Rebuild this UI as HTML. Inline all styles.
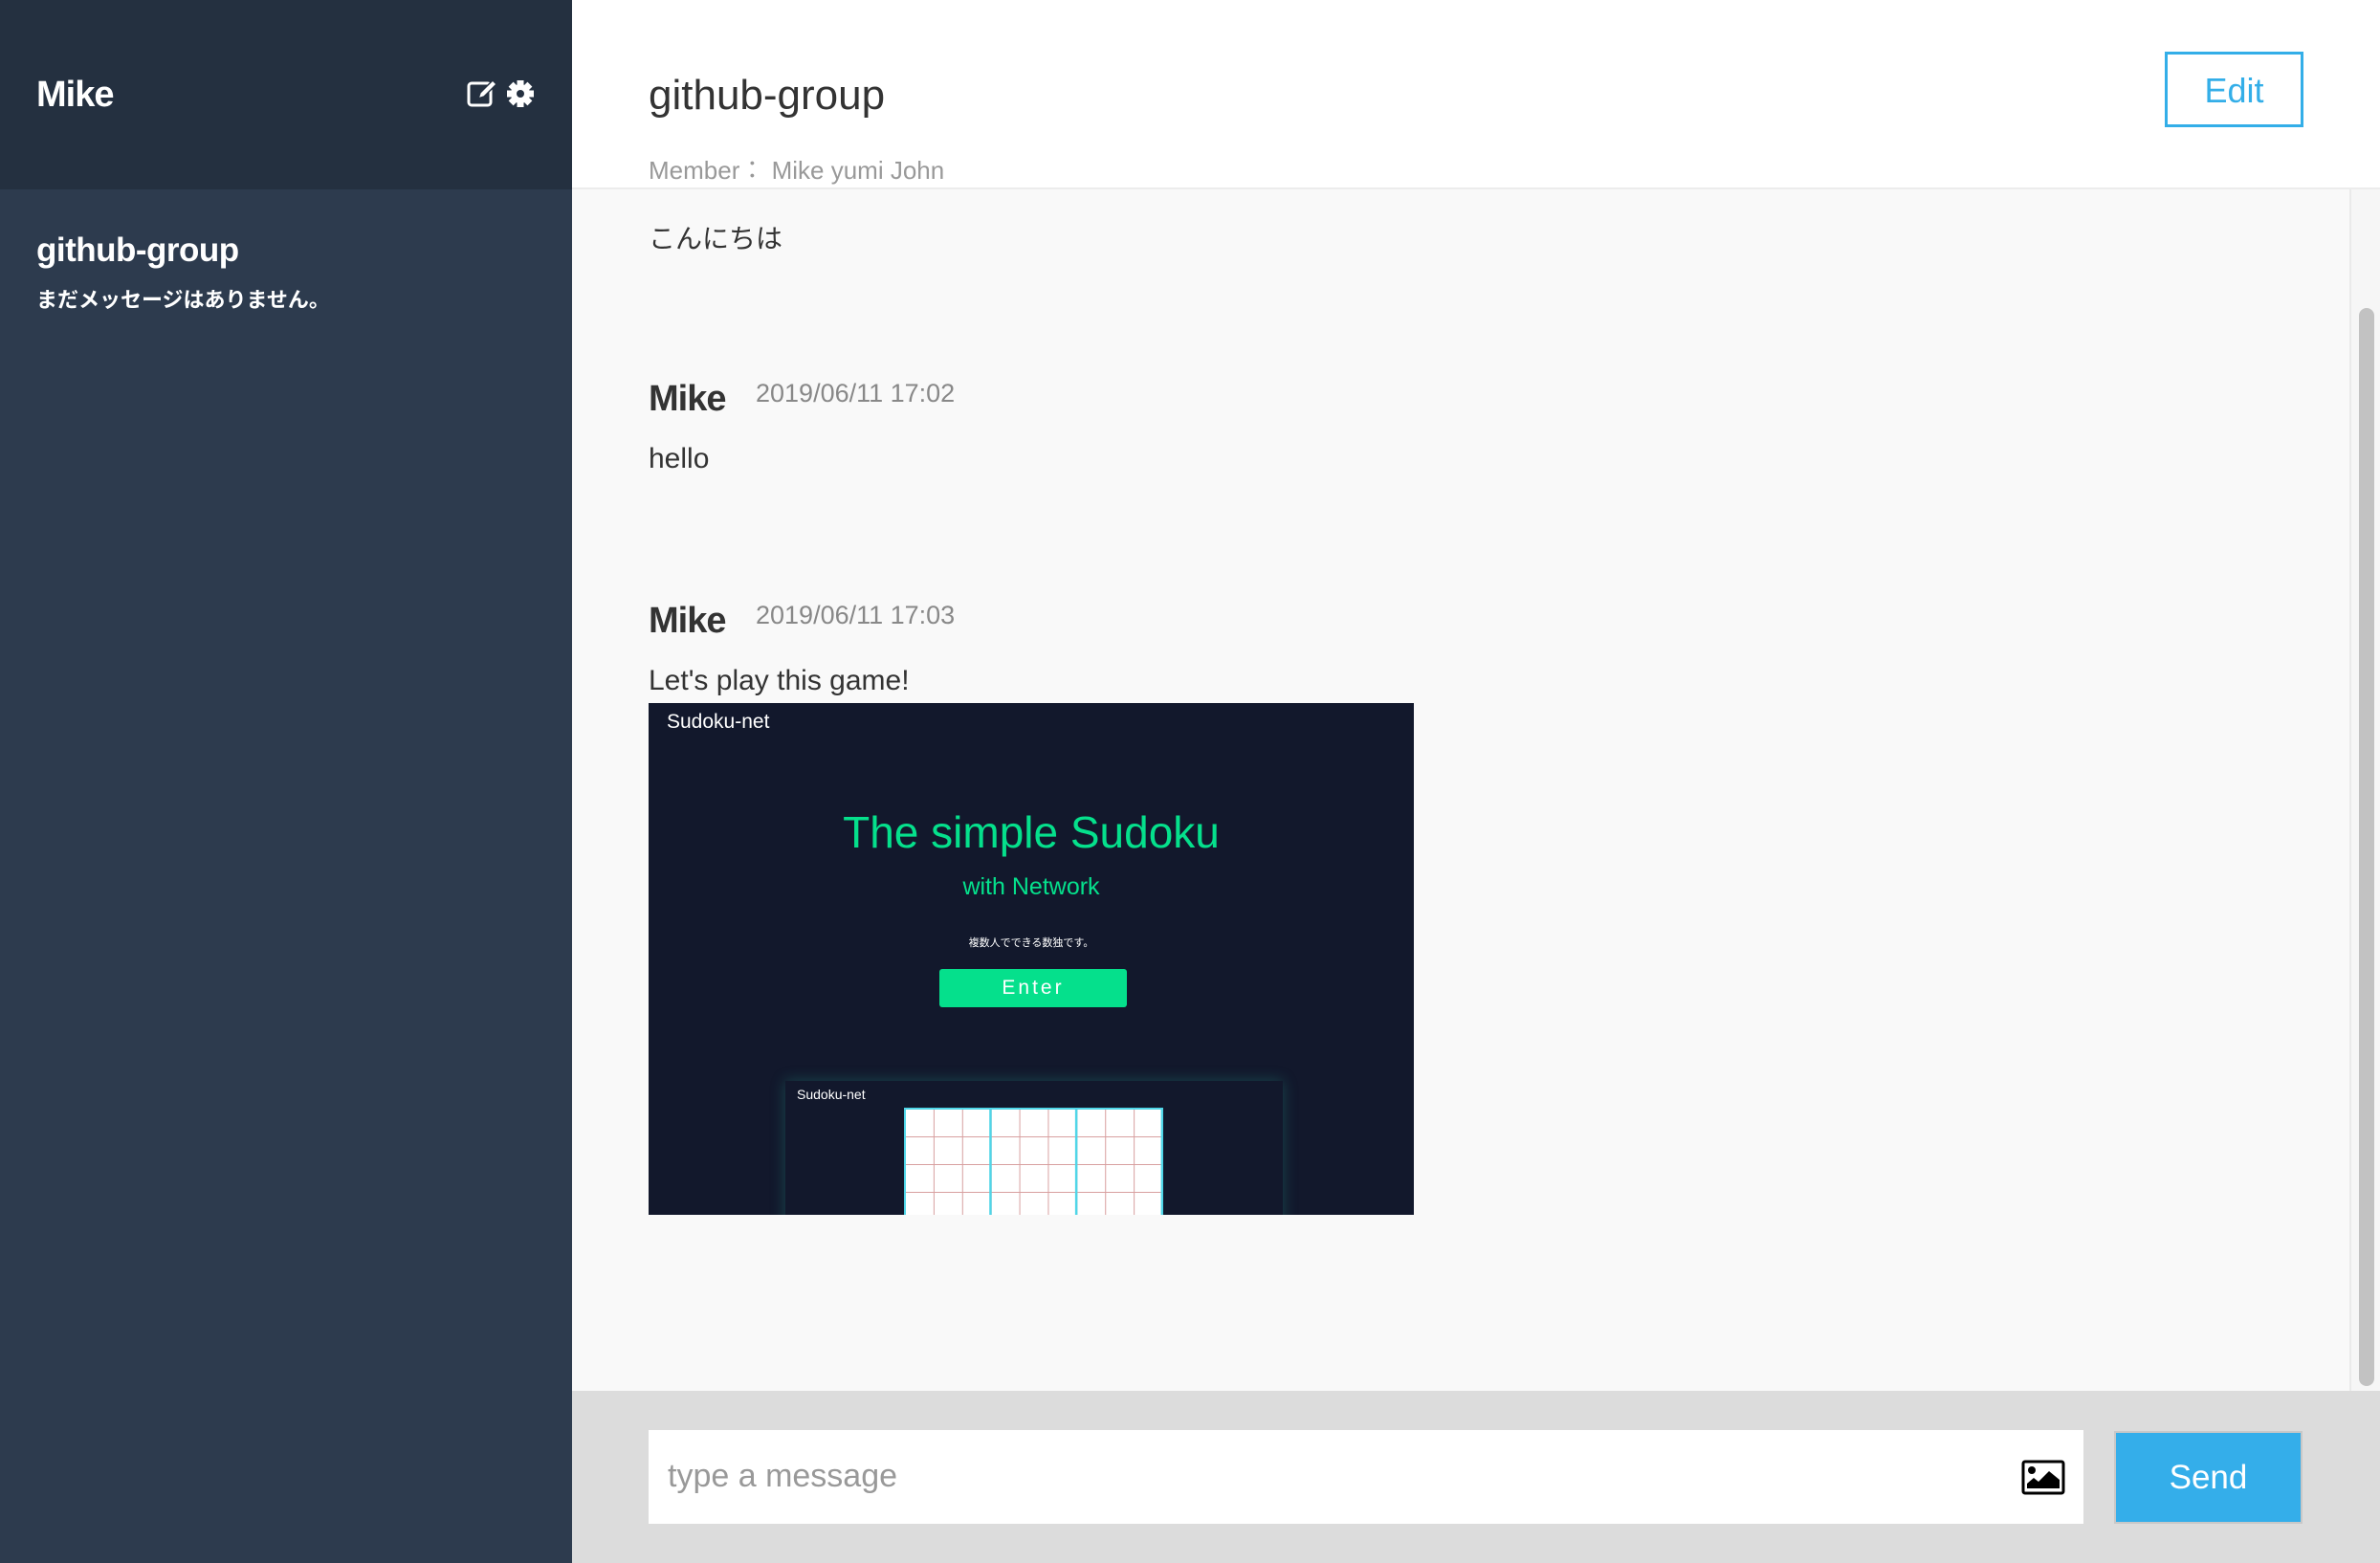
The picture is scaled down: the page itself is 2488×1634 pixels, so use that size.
<!DOCTYPE html>
<html><head><meta charset="utf-8"><style>
*{margin:0;padding:0;box-sizing:border-box}
body{width:2488px;height:1634px;position:relative;overflow:hidden;background:#f9f9f9;font-family:"Liberation Sans","Noto Sans CJK JP",sans-serif}
.abs{position:absolute}
</style></head><body>
<div class="abs" style="left:0;top:0;width:598px;height:198px;background:#243040"></div>
<div class="abs" style="left:0;top:198px;width:598px;height:1436px;background:#2d3b4e"></div>
<div class="abs" style="left:38px;top:78px;font-size:38px;font-weight:bold;color:#fff;letter-spacing:-1px">Mike</div>
<svg class="abs" style="left:488px;top:82px" width="32" height="32" viewBox="0 0 32 32"><rect x="2" y="5" width="23" height="23" rx="3" fill="none" stroke="#fff" stroke-width="3"/><path d="M12 21l2-6 13-13 4 4-13 13z" fill="#fff" stroke="#243040" stroke-width="1.5"/></svg>
<svg class="abs" style="left:529px;top:83px" width="30" height="30" viewBox="0 0 30 30"><g fill="#fff" transform="translate(15 15)"><circle r="10"/><g id="t"><rect x="-3.5" y="-14" width="7" height="6"/></g><use href="#t" transform="rotate(45)"/><use href="#t" transform="rotate(90)"/><use href="#t" transform="rotate(135)"/><use href="#t" transform="rotate(180)"/><use href="#t" transform="rotate(225)"/><use href="#t" transform="rotate(270)"/><use href="#t" transform="rotate(315)"/><circle r="4" fill="#243040"/></g></svg>
<div class="abs" style="left:38px;top:242px;font-size:35px;font-weight:bold;color:#fff;letter-spacing:-0.5px">github-group</div>
<div class="abs" style="left:38px;top:296px;font-size:22px;font-weight:bold;color:#fff">まだメッセージはありません。</div>

<div class="abs" style="left:598px;top:0;width:1890px;height:198px;background:#fff;border-bottom:2px solid #ececec"></div>
<div class="abs" style="left:678px;top:75px;font-size:44px;color:#333">github-group</div>
<div class="abs" style="left:678px;top:158px;font-size:26px;color:#999">Member： Mike yumi John</div>
<div class="abs" style="left:2263px;top:54px;width:145px;height:79px;border:3px solid #33aee8;color:#33aee8;font-size:36px;text-align:center;line-height:75px">Edit</div>

<div class="abs" style="left:2456px;top:198px;width:32px;height:1256px;background:#f6f6f6;border-left:2px solid #eaeaea"></div>
<div class="abs" style="left:2466px;top:322px;width:16px;height:1127px;background:#c2c2c2;border-radius:8px"></div>

<div class="abs" style="left:678px;top:228px;font-size:28px;color:#333">こんにちは</div>
<div class="abs" style="left:678px;top:396px;font-size:38px;font-weight:bold;color:#333;letter-spacing:-1px">Mike</div>
<div class="abs" style="left:790px;top:396px;font-size:27px;color:#888">2019/06/11 17:02</div>
<div class="abs" style="left:678px;top:463px;font-size:30px;color:#333">hello</div>
<div class="abs" style="left:678px;top:628px;font-size:38px;font-weight:bold;color:#333;letter-spacing:-1px">Mike</div>
<div class="abs" style="left:790px;top:628px;font-size:27px;color:#888">2019/06/11 17:03</div>
<div class="abs" style="left:678px;top:695px;font-size:30px;color:#333">Let's play this game!</div>

<div class="abs" style="left:678px;top:735px;width:800px;height:535px;background:#12182c;overflow:hidden">
  <div class="abs" style="left:19px;top:8px;font-size:21px;color:#fff">Sudoku-net</div>
  <div class="abs" style="left:0;top:108px;width:800px;text-align:center;font-size:46px;color:#05e08c">The simple Sudoku</div>
  <div class="abs" style="left:0;top:178px;width:800px;text-align:center;font-size:25px;color:#05e08c">with Network</div>
  <div class="abs" style="left:0;top:242px;width:800px;text-align:center;font-size:11px;color:#fff">複数人でできる数独です。</div>
  <div class="abs" style="left:304px;top:278px;width:196px;height:40px;background:#05e08c;border-radius:3px;color:#fff;font-size:21px;letter-spacing:3px;text-align:center;line-height:40px">Enter</div>
  <div class="abs" style="left:143px;top:395px;width:520px;height:160px;background:#12182c;box-shadow:0 0 14px rgba(40,160,140,0.35)"></div>
  <div class="abs" style="left:155px;top:401px;font-size:14px;color:#fff">Sudoku-net</div>
  <div class="abs" style="left:267px;top:423px;width:271px;height:120px;background-color:#fff;border:2px solid #4fd6e8;background-image:linear-gradient(90deg,transparent 87px,#4fd6e8 87px,#4fd6e8 90px,transparent 90px),linear-gradient(0deg,#d8a0a0 1px,transparent 1px),linear-gradient(90deg,transparent 29px,#d8a0a0 29px,#d8a0a0 30px,transparent 30px);background-size:89.7px 100%,100% 29px,29.9px 100%;background-position:0 0,0 0,0 0"></div>
</div>

<div class="abs" style="left:598px;top:1454px;width:1890px;height:180px;background:#dcdcdc"></div>
<div class="abs" style="left:678px;top:1495px;width:1500px;height:98px;background:#fff"></div>
<div class="abs" style="left:698px;top:1524px;font-size:34px;color:#999">type a message</div>
<svg class="abs" style="left:2113px;top:1526px" width="46" height="37" viewBox="0 0 46 37"><rect x="2" y="2" width="42" height="33" rx="2" fill="none" stroke="#000" stroke-width="3"/><circle cx="11" cy="11" r="4"/><path d="M6 30v-5l7-6 5 4 11-11 11 9v9z"/></svg>
<div class="abs" style="left:2210px;top:1496px;width:197px;height:97px;background:#34aeea;border:2px solid #c8c8c8;color:#fff;font-size:35px;text-align:center;line-height:93px">Send</div>
</body></html>
